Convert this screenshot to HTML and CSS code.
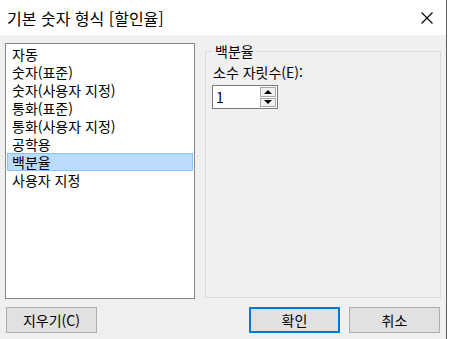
FILE: index.html
```html
<!DOCTYPE html>
<html lang="ko">
<head>
    <meta charset="UTF-8">
    <title>기본 숫자 형식</title>
    <link rel="stylesheet" href="styles.css">
</head>
<body>
    <div class="dialog">
        <div class="titlebar">
            <span class="title">기본 숫자 형식 [할인율]</span>
            <span class="close-btn">
                <svg width="12" height="12" viewBox="0 0 12 12">
                    <path d="M0.5 0.5 L11.5 11.5 M11.5 0.5 L0.5 11.5" stroke="#000" stroke-width="1.1" fill="none"/>
                </svg>
            </span>
        </div>

        <div class="content">
            <ul class="format-list">
                <li>자동</li>
                <li>숫자(표준)</li>
                <li>숫자(사용자 지정)</li>
                <li>통화(표준)</li>
                <li>통화(사용자 지정)</li>
                <li>공학용</li>
                <li class="selected">백분율</li>
                <li>사용자 지정</li>
            </ul>

            <fieldset class="group">
                <legend>백분율</legend>
                <label class="field-label" for="decimals">소수 자릿수(E):</label>
                <div class="spin">
                    <input type="text" id="decimals" value="1">
                    <div class="spin-buttons">
                        <span class="spin-btn"><span class="arrow-up"></span></span>
                        <span class="spin-btn"><span class="arrow-down"></span></span>
                    </div>
                </div>
            </fieldset>
        </div>

        <div class="footer">
            <button class="btn">지우기(C)</button>
            <div class="footer-right">
                <button class="btn default">확인</button>
                <button class="btn">취소</button>
            </div>
        </div>
    </div>
</body>
</html>
```

FILE: styles.css
```css
body {
    margin: 0;
    background-color: #fff;
    font-family: "Noto Sans CJK KR", "Noto Sans", sans-serif;
    font-size: 14px;
    color: #000;
}

.dialog {
    width: 446px;
    height: 339px;
    background-color: #f0f0f0;
    border-right: 1px solid #5f5f5f;
    display: flex;
    flex-direction: column;
}

.titlebar {
    height: 35px;
    background-color: #fff;
    display: flex;
    align-items: center;
    justify-content: space-between;
    padding: 0 13px 0 7px;
}

.title {
    font-size: 16px;
    line-height: 20px;
}

.close-btn {
    display: flex;
}

.content {
    display: flex;
    align-items: flex-start;
    padding: 8px 0 0 5px;
}

/* List box */
.format-list {
    list-style: none;
    margin: 0;
    padding: 1px;
    width: 190px;
    height: 256px;
    box-sizing: border-box;
    background: #fff;
    border: 1px solid #828790;
}

.format-list li {
    height: 18px;
    line-height: 18px;
    padding-left: 5px;
    box-sizing: border-box;
    white-space: nowrap;
}

.format-list li.selected {
    background-color: #b9dcff;
    border: 1px solid #88c4f7;
    line-height: 16px;
    padding-left: 4px;
}

/* Group box */
.group {
    margin: 0 0 0 10px;
    padding: 0 6px;
    width: 236px;
    height: 255px;
    box-sizing: border-box;
    border: 1px solid #dcdcdc;
}

.group legend {
    padding: 0 3px;
    line-height: 16px;
}

.field-label {
    display: block;
    margin-top: 4px;
    line-height: 18px;
    padding-left: 1px;
}

.spin {
    display: flex;
    margin-top: 4px;
    width: 66px;
    height: 24px;
    box-sizing: border-box;
    background: #fff;
    border: 1px solid #7a7a7a;
}

.spin input {
    flex: 1;
    min-width: 0;
    border: none;
    outline: none;
    padding: 0 0 0 3px;
    font-family: inherit;
    font-size: 14px;
    background: transparent;
}

.spin-buttons {
    display: flex;
    flex-direction: column;
    width: 16px;
    padding: 1px 1px 1px 0;
    gap: 1px;
}

.spin-btn {
    flex: 1;
    display: flex;
    align-items: center;
    justify-content: center;
    background: #f0f0f0;
    border: 1px solid #a8a8a8;
}

.arrow-up, .arrow-down {
    width: 0;
    height: 0;
    border-left: 4px solid transparent;
    border-right: 4px solid transparent;
}

.arrow-up {
    border-bottom: 4px solid #000;
}

.arrow-down {
    border-top: 4px solid #000;
}

/* Buttons */
.footer {
    display: flex;
    justify-content: space-between;
    padding: 8px 6px 0 6px;
}

.footer-right {
    display: flex;
    gap: 9px;
}

.btn {
    width: 91px;
    height: 26px;
    padding: 0;
    font-family: inherit;
    font-size: 14px;
    color: #000;
    background-color: #e1e1e1;
    border: 1px solid #adadad;
}

.btn.default {
    border: 2px solid #0078d7;
}
```
